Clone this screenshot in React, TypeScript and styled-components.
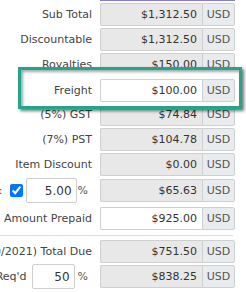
import React from 'react'
import styled, { createGlobalStyle } from 'styled-components'

const GlobalStyle = createGlobalStyle`
    html, body {
        margin: 0;
        padding: 0;
        background: #fff;
        overflow: hidden;
    }
    body {
        font-family: 'DejaVu Sans', Verdana, sans-serif;
        font-size: 11px;
        color: #333;
    }
`

const Page = styled.div`
    position: relative;
    width: 246px;
    height: 292px;
    overflow: hidden;
`

const Form = styled.div`
    display: flex;
    flex-direction: column;
    gap: 2px;
`

const CutTop = styled.div`
    margin-left: 100px;
    width: 135px;
    height: 1px;
    background: #8a80c0;
`

const Row = styled.div<{ $mt?: number; $tall?: boolean }>`
    display: flex;
    align-items: center;
    gap: 8px;
    height: ${(p) => (p.$tall ? 25 : 23)}px;
    margin-top: ${(p) => p.$mt ?? 0}px;
`

const Label = styled.div<{ $w?: number }>`
    width: ${(p) => p.$w ?? 92}px;
    flex-shrink: 0;
    display: flex;
    justify-content: flex-end;
    align-items: center;
    white-space: nowrap;
    color: #444;
    & > * {
        flex-shrink: 0;
    }
`

const Field = styled.div`
    display: flex;
    width: 135px;
    height: 23px;
    flex-shrink: 0;
`

const Value = styled.div<{ $editable?: boolean }>`
    flex: 1;
    display: flex;
    align-items: center;
    justify-content: flex-end;
    padding-right: 5px;
    border: 1px solid #cfcfcf;
    border-right: none;
    border-radius: 2px 0 0 2px;
    background: ${(p) => (p.$editable ? '#fff' : '#e8e8e8')};
    color: #333;
`

const Addon = styled.div`
    width: 33px;
    box-sizing: border-box;
    display: flex;
    align-items: center;
    justify-content: center;
    border: 1px solid #cfcfcf;
    border-radius: 0 2px 2px 0;
    background: #e9ecef;
    color: #555;
`

const SmallInput = styled.div<{ $w: number }>`
    width: ${(p) => p.$w}px;
    height: 25px;
    box-sizing: border-box;
    display: flex;
    align-items: center;
    justify-content: flex-end;
    padding-right: 4px;
    border: 1px solid #cfcfcf;
    border-radius: 2px;
    background: #fff;
    color: #333;
    font-size: 12px;
`

const Check = styled.input`
    width: 13px;
    height: 13px;
    margin: 0 3px 0 7px;
    accent-color: #0075ff;
`

const Pct = styled.span<{ $gap: number }>`
    color: #555;
    margin: 0 4px 0 ${(p) => p.$gap}px;
`

const LabelText = styled.span<{ $gap?: number }>`
    margin-right: ${(p) => p.$gap ?? 0}px;
`

const Divider = styled.div`
    height: 1px;
    width: 233px;
    background: #ddd;
    margin: 3px 0 2px;
`

const NextBox = styled.div`
    width: 40px;
    height: 20px;
    box-sizing: border-box;
    border-top: 1px solid #cfcfcf;
    margin-top: 2px;
`

const Highlight = styled.div`
    position: absolute;
    left: 18px;
    top: 67px;
    width: 224px;
    height: 42px;
    box-sizing: border-box;
    border: 3px solid #1ea88b;
    background: #fff;
    box-shadow: 2px 2px 3px rgba(0, 0, 0, 0.55),
        inset 2px 2px 3px rgba(0, 0, 0, 0.35);
    padding: 9px 4px 0 0;
`

const HighlightRow = styled.div`
    display: flex;
    align-items: center;
    gap: 8px;
    height: 23px;
`

type FieldRowProps = { label: string; value: string; editable?: boolean }

const Amount = ({ value, editable }: { value: string; editable?: boolean }) => (
    <Field>
        <Value $editable={editable}>{value}</Value>
        <Addon>USD</Addon>
    </Field>
)

const FieldRow = ({ label, value, editable }: FieldRowProps) => (
    <Row>
        <Label>{label}</Label>
        <Amount value={value} editable={editable} />
    </Row>
)

const App = () => {
    return (
        <Page>
            <GlobalStyle />
            <Form>
                <CutTop />
                <FieldRow label="Sub Total" value="$1,312.50" />
                <FieldRow label="Discountable" value="$1,312.50" />
                <FieldRow label="Royalties" value="$150.00" />
                <FieldRow label="Freight" value="$100.00" editable />
                <FieldRow label="(5%) GST" value="$74.84" />
                <FieldRow label="(7%) PST" value="$104.78" />
                <FieldRow label="Item Discount" value="$0.00" />
                <Row $tall>
                    <Label>
                        <LabelText>Discount:</LabelText>
                        <Check type="checkbox" defaultChecked />
                        <SmallInput $w={51}>5.00</SmallInput>
                        <Pct $gap={1}>%</Pct>
                    </Label>
                    <Amount value="$65.63" />
                </Row>
                <Row $mt={2}>
                    <Label>Amount Prepaid</Label>
                    <Amount value="$925.00" editable />
                </Row>
                <Divider />
                <FieldRow label="(Due 06/30/2021) Total Due" value="$751.50" />
                <Row>
                    <Label>
                        <LabelText $gap={5}>Deposit Req'd</LabelText>
                        <SmallInput $w={43}>50</SmallInput>
                        <Pct $gap={3}>%</Pct>
                    </Label>
                    <Amount value="$838.25" />
                </Row>
                <NextBox />
            </Form>
            <Highlight>
                <HighlightRow>
                    <Label $w={71}>Freight</Label>
                    <Amount value="$100.00" editable />
                </HighlightRow>
            </Highlight>
        </Page>
    )
}

export default App
